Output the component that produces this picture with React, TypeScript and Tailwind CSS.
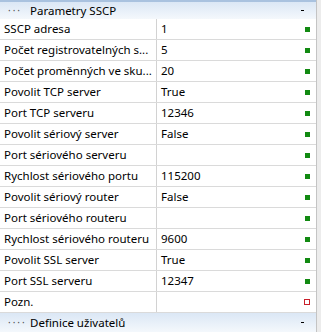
import React from 'react';

type Row = { label: string; value: string; ok: boolean };

const ROWS: Row[] = [
    { label: 'SSCP adresa', value: '1', ok: true },
    { label: 'Počet registrovatelných s...', value: '5', ok: true },
    { label: 'Počet proměnných ve sku...', value: '20', ok: true },
    { label: 'Povolit TCP server', value: 'True', ok: true },
    { label: 'Port TCP serveru', value: '12346', ok: true },
    { label: 'Povolit sériový server', value: 'False', ok: true },
    { label: 'Port sériového serveru', value: '', ok: true },
    { label: 'Rychlost sériového portu', value: '115200', ok: true },
    { label: 'Povolit sériový router', value: 'False', ok: true },
    { label: 'Port sériového routeru', value: '', ok: true },
    { label: 'Rychlost sériového routeru', value: '9600', ok: true },
    { label: 'Povolit SSL server', value: 'True', ok: true },
    { label: 'Port SSL serveru', value: '12347', ok: true },
    { label: 'Pozn.', value: '', ok: false },
];

const GroupHeader: React.FC<{ title: string; dots: string; top?: boolean }> = ({ title, dots, top }) => (
    <div className={`flex items-center h-[21px] bg-gradient-to-b from-[#dbe7f5] to-[#f4f8fc] ${top ? 'border-t-2 border-[#a9c2df]' : ''}`}>
        <span className="pl-[8px] w-[30px] text-[10px] tracking-[2px] text-[#555]">{dots}</span>
        <span className="flex-1 truncate">{title}</span>
        <span className="w-[3px] h-[1px] bg-black mr-[12px]" />
    </div>
);

export default function App() {
    return (
        <div className="w-[321px] h-[332px] overflow-hidden bg-white flex text-[11.5px] text-black" style={{ fontFamily: '"Noto Sans", sans-serif' }}>
            <div className="w-[316px] flex flex-col">
                <GroupHeader title="Parametry SSCP" dots="···" top />
                {ROWS.map(r => (
                    <div key={r.label} className="flex h-[21px] border-b border-[#dadada]">
                        <div className="w-[157px] shrink-0 pl-[4px] whitespace-nowrap overflow-hidden leading-[20px] border-r border-[#d2d2d2]">{r.label}</div>
                        <div className="flex-1 flex items-center pl-[4px]">
                            <span className="flex-1 leading-[20px]">{r.value}</span>
                            {r.ok ? (
                                <span className="w-[5px] h-[5px] bg-[#128a12] mr-[6px]" />
                            ) : (
                                <span className="w-[6px] h-[6px] border border-[#c8202a] mr-[6px]" />
                            )}
                        </div>
                    </div>
                ))}
                <GroupHeader title="Definice uživatelů" dots="····" />
            </div>
            <div className="flex-1 border-l border-[#c4c4c4] bg-[#ececec]" />
        </div>
    );
}
